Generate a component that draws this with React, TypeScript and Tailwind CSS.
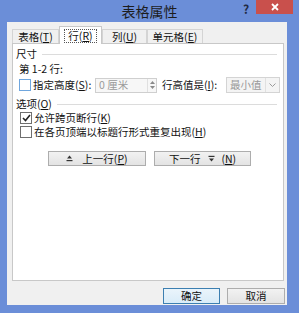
import React from 'react';

const CheckBox = ({ checked, hover }: { checked?: boolean; hover?: boolean }) => (
  <span
    className={`flex h-[12px] w-[12px] shrink-0 items-center justify-center border bg-white ${
      hover ? 'border-[#6fa6de]' : 'border-[#6f6f6f]'
    }`}
  >
    {checked && (
      <svg width="9" height="8" viewBox="0 0 9 8">
        <path d="M1 4 L3.5 6.5 L8 1" fill="none" stroke="#222" strokeWidth="1.6" />
      </svg>
    )}
  </span>
);

const Section = ({ label, hot }: { label: string; hot?: string }) => (
  <div className="flex h-[14px] items-center">
    <span className="shrink-0">
      {label}
      {hot && (
        <>
          (<u>{hot}</u>)
        </>
      )}
    </span>
    <div className="ml-[5px] mr-[6px] h-px flex-1 bg-[#dcdcdc]" />
  </div>
);

const Tab = ({ label, hot, width, active }: { label: string; hot: string; width: string; active?: boolean }) => (
  <div
    className={`flex items-center justify-center border border-b-0 ${width} ${
      active
        ? 'relative z-10 -mb-px h-[18px] border-[#c8c8c8] bg-white'
        : 'h-[14px] border-[#d4d4d4] bg-[#f0f0f0]'
    }`}
  >
    <span className={active ? 'border border-dotted border-[#555] px-[3px] leading-[12px]' : 'leading-[12px]'}>
      {label}(<u>{hot}</u>)
    </span>
  </div>
);

const ArrowUp = () => (
  <svg width="7" height="7" viewBox="0 0 7 7" className="mr-[9px]">
    <path d="M3.5 0.5 L6 3.5 L1 3.5 Z" fill="#333" />
    <rect x="0.5" y="5" width="6" height="1.2" fill="#333" />
  </svg>
);

const ArrowDown = () => (
  <svg width="7" height="7" viewBox="0 0 7 7" className="ml-[8px] mr-[6px]">
    <rect x="0.5" y="0.8" width="6" height="1.2" fill="#333" />
    <path d="M1 3.5 L6 3.5 L3.5 6.5 Z" fill="#333" />
  </svg>
);

export default function App() {
  return (
    <div className="flex h-[313px] w-[299px] flex-col whitespace-nowrap bg-[#6b8ed8] font-['Noto_Sans_CJK_SC','Liberation_Sans',sans-serif] text-[10.5px] leading-[14px] text-[#111]">
      {/* title bar */}
      <div className="relative h-[22px] shrink-0">
        <div className="pt-[2px] text-center text-[14px] leading-[18px] text-[#1d1d1d]">表格属性</div>
        <span className="absolute left-[243px] top-[2px] text-[12px] font-bold text-[#1f2a44]">?</span>
        <div className="absolute left-[256px] top-0 flex h-[14px] w-[37px] items-center justify-center bg-[#c9504c]">
          <svg width="8" height="8" viewBox="0 0 8 8">
            <path d="M1 1 L7 7 M7 1 L1 7" stroke="#fff" strokeWidth="1.8" />
          </svg>
        </div>
      </div>

      {/* client */}
      <div className="ml-[7px] flex h-[283px] w-[280px] flex-col bg-[#f0f0f0]">
        <div className="ml-[5px] mt-[4px] flex items-end">
          <Tab label="表格" hot="T" width="w-[47px]" />
          <Tab label="行" hot="R" width="w-[43px]" active />
          <Tab label="列" hot="U" width="w-[45px]" />
          <Tab label="单元格" hot="E" width="w-[56px]" />
        </div>

        <div className="ml-[5px] mr-[3px] flex h-[238px] flex-col border border-[#c8c8c8] bg-white pl-[3px] pt-[3px]">
          <Section label="尺寸" />
          <div className="mt-[1px] pl-[3px]">第 1-2 行:</div>

          <div className="mt-[1px] flex h-[16px] items-center pl-[3px]">
            <CheckBox hover />
            <span className="ml-[2px] w-[62px]">
              指定高度(<u>S</u>):
            </span>
            <div className="flex h-[15px] w-[62px] items-center border border-[#cfcfcf] bg-[#f7f7f7]">
              <span className="ml-[3px] flex-1 text-[#9a9a9a]">0 厘米</span>
              <div className="flex h-full w-[9px] flex-col items-center justify-center gap-[2px] border-l border-[#e0e0e0]">
                <svg width="5" height="3" viewBox="0 0 5 3">
                  <path d="M0 3 L2.5 0 L5 3 Z" fill="#8a8a8a" />
                </svg>
                <svg width="5" height="3" viewBox="0 0 5 3">
                  <path d="M0 0 L5 0 L2.5 3 Z" fill="#8a8a8a" />
                </svg>
              </div>
            </div>
            <span className="ml-[5px] w-[64px]">
              行高值是(<u>I</u>):
            </span>
            <div className="flex h-[16px] w-[54px] items-center border border-[#d4d4d4] bg-[#f4f4f4]">
              <span className="ml-[3px] flex-1 text-[#9a9a9a]">最小值</span>
              <div className="flex h-full w-[14px] items-center justify-center border-l border-[#e0e0e0]">
                <svg width="7" height="4" viewBox="0 0 7 4">
                  <path d="M0.5 0.5 L3.5 3.5 L6.5 0.5" fill="none" stroke="#9a9a9a" strokeWidth="1" />
                </svg>
              </div>
            </div>
          </div>

          <div className="mt-[4px]">
            <Section label="选项" hot="O" />
          </div>
          <div className="flex h-[14px] items-center pl-[4px]">
            <CheckBox checked />
            <span className="ml-[2px]">
              允许跨页断行(<u>K</u>)
            </span>
          </div>
          <div className="flex h-[14px] items-center pl-[4px]">
            <CheckBox />
            <span className="ml-[2px]">
              在各页顶端以标题行形式重复出现(<u>H</u>)
            </span>
          </div>

          <div className="ml-[32px] mt-[12px] flex gap-[8px]">
            <div className="flex h-[15px] w-[98px] items-center justify-center border border-[#adadad] bg-[linear-gradient(#f2f2f2,#e3e3e3)]">
              <ArrowUp />
              上一行(<u>P</u>)
            </div>
            <div className="flex h-[15px] w-[97px] items-center justify-center border border-[#adadad] bg-[linear-gradient(#f2f2f2,#e3e3e3)]">
              下一行
              <ArrowDown />
              (<u>N</u>)
            </div>
          </div>
        </div>

        <div className="ml-[156px] mt-[7px] flex gap-[7px]">
          <div className="flex h-[16px] w-[57px] items-center justify-center border border-[#3c7fb1] bg-[linear-gradient(#eaf4fb,#d9ecf8)]">
            确定
          </div>
          <div className="flex h-[16px] w-[58px] items-center justify-center border border-[#adadad] bg-[linear-gradient(#f2f2f2,#e3e3e3)]">
            取消
          </div>
        </div>
      </div>
    </div>
  );
}
